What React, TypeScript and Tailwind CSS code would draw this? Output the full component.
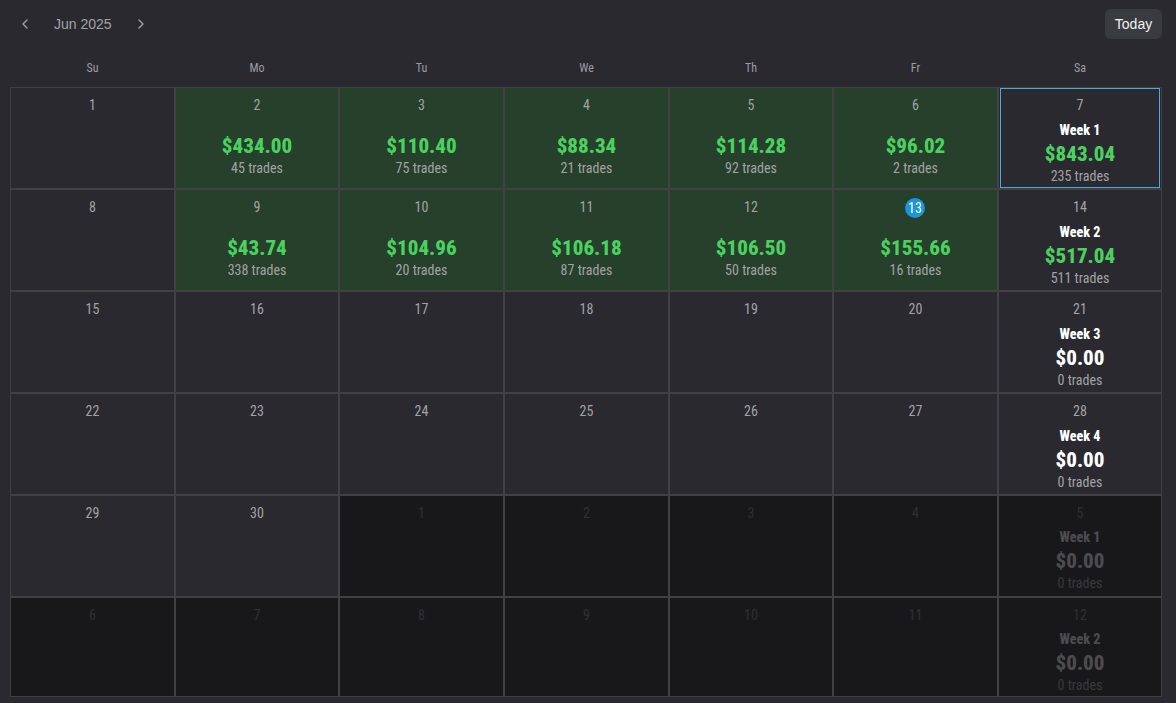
import { ChevronLeft, ChevronRight } from 'lucide-react';

const WEEK_DAYS = ['Su', 'Mo', 'Tu', 'We', 'Th', 'Fr', 'Sa'];

type Day = {
  label: number;
  amount?: string;
  trades?: string;
  week?: string;
  muted?: boolean;
  today?: boolean;
  selected?: boolean;
};

const DAYS: Day[] = [
  { label: 1 },
  { label: 2, amount: '$434.00', trades: '45 trades' },
  { label: 3, amount: '$110.40', trades: '75 trades' },
  { label: 4, amount: '$88.34', trades: '21 trades' },
  { label: 5, amount: '$114.28', trades: '92 trades' },
  { label: 6, amount: '$96.02', trades: '2 trades' },
  { label: 7, week: 'Week 1', amount: '$843.04', trades: '235 trades', selected: true },
  { label: 8 },
  { label: 9, amount: '$43.74', trades: '338 trades' },
  { label: 10, amount: '$104.96', trades: '20 trades' },
  { label: 11, amount: '$106.18', trades: '87 trades' },
  { label: 12, amount: '$106.50', trades: '50 trades' },
  { label: 13, amount: '$155.66', trades: '16 trades', today: true },
  { label: 14, week: 'Week 2', amount: '$517.04', trades: '511 trades' },
  { label: 15 },
  { label: 16 },
  { label: 17 },
  { label: 18 },
  { label: 19 },
  { label: 20 },
  { label: 21, week: 'Week 3', amount: '$0.00', trades: '0 trades' },
  { label: 22 },
  { label: 23 },
  { label: 24 },
  { label: 25 },
  { label: 26 },
  { label: 27 },
  { label: 28, week: 'Week 4', amount: '$0.00', trades: '0 trades' },
  { label: 29 },
  { label: 30 },
  { label: 1, muted: true },
  { label: 2, muted: true },
  { label: 3, muted: true },
  { label: 4, muted: true },
  { label: 5, week: 'Week 1', amount: '$0.00', trades: '0 trades', muted: true },
  { label: 6, muted: true },
  { label: 7, muted: true },
  { label: 8, muted: true },
  { label: 9, muted: true },
  { label: 10, muted: true },
  { label: 11, muted: true },
  { label: 12, week: 'Week 2', amount: '$0.00', trades: '0 trades', muted: true },
];

function DayCell({ day }: { day: Day }) {
  const isWeek = !!day.week;
  const profit = !isWeek && !!day.amount;
  const amountColor = day.muted
    ? 'text-[#4c4c4e]'
    : day.amount === '$0.00'
      ? 'text-white'
      : 'text-[#4ad15f]';

  return (
    <div
      className={`relative flex h-full flex-col items-center overflow-hidden border border-[#414143] pt-[7px] ${
        day.muted ? 'bg-[#18181a]' : profit ? 'bg-[#26402b]' : 'bg-[#2a2930]'
      }`}
    >
      {day.selected && <div className="absolute inset-x-[1px] inset-y-0 border border-[#4aa9d8]" />}
      {day.today ? (
        <span className="mt-[1px] -mb-[1px] -ml-[1px] flex h-[20px] w-[20px] items-center justify-center rounded-full bg-[#1a96d9] text-[14px] leading-[20px] text-white">
          {day.label}
        </span>
      ) : (
        <span className={`text-[14px] leading-[20px] ${day.muted ? 'text-[#303032]' : 'text-[#a3a3a3]'}`}>
          {day.label}
        </span>
      )}
      {isWeek && (
        <span
          className={`${day.muted ? 'mt-[5px] text-[#4c4c4e]' : 'mt-[6px] text-white'} text-[14px] font-extrabold leading-[18px]`}
        >
          {day.week}
        </span>
      )}
      {day.amount && (
        <span className={`${isWeek ? 'mt-[1px]' : 'mt-[17px]'} text-[21px] font-extrabold leading-[28px] ${amountColor}`}>
          {day.amount}
        </span>
      )}
      {day.trades && (
        <span className={`-mt-[1px] text-[14px] leading-[18px] ${day.muted ? 'text-[#38383a]' : 'text-[#a3a3a3]'}`}>
          {day.trades}
        </span>
      )}
    </div>
  );
}

export default function App() {
  return (
    <div
      className="h-[703px] w-[1176px] overflow-hidden bg-[#2a2930] pl-[10px] pr-[14px]"
      style={{ fontFamily: 'Roboto, sans-serif', fontStretch: '75%' }}
    >
      <div className="flex h-[48px] items-center justify-between">
        <div className="flex items-center text-[#a3a3a3]">
          <button type="button" className="flex w-[30px] justify-center">
            <ChevronLeft size={16} strokeWidth={2} />
          </button>
          <span className="ml-[14px] text-[14px] [font-family:'Liberation_Sans',sans-serif]">Jun 2025</span>
          <button type="button" className="ml-[14px] flex w-[30px] justify-center">
            <ChevronRight size={16} strokeWidth={2} />
          </button>
        </div>
        <button
          type="button"
          className="flex h-[30px] w-[57px] items-center justify-center rounded-[6px] bg-[#3a3b41] text-[14px] text-[#f0f0f0] [font-family:'Liberation_Sans',sans-serif]"
        >
          Today
        </button>
      </div>
      <div className="grid h-[39px] grid-cols-[165px_164px_165px_165px_164px_165px_164px] items-center">
        {WEEK_DAYS.map((d) => (
          <div key={d} className="text-center text-[12px] text-[#9c9ca3]">
            {d}
          </div>
        ))}
      </div>
      <div className="grid h-[610px] grid-cols-[165px_164px_165px_165px_164px_165px_164px] grid-rows-[102px_102px_102px_102px_102px_100px]">
        {DAYS.map((day, i) => (
          <DayCell key={i} day={day} />
        ))}
      </div>
    </div>
  );
}
